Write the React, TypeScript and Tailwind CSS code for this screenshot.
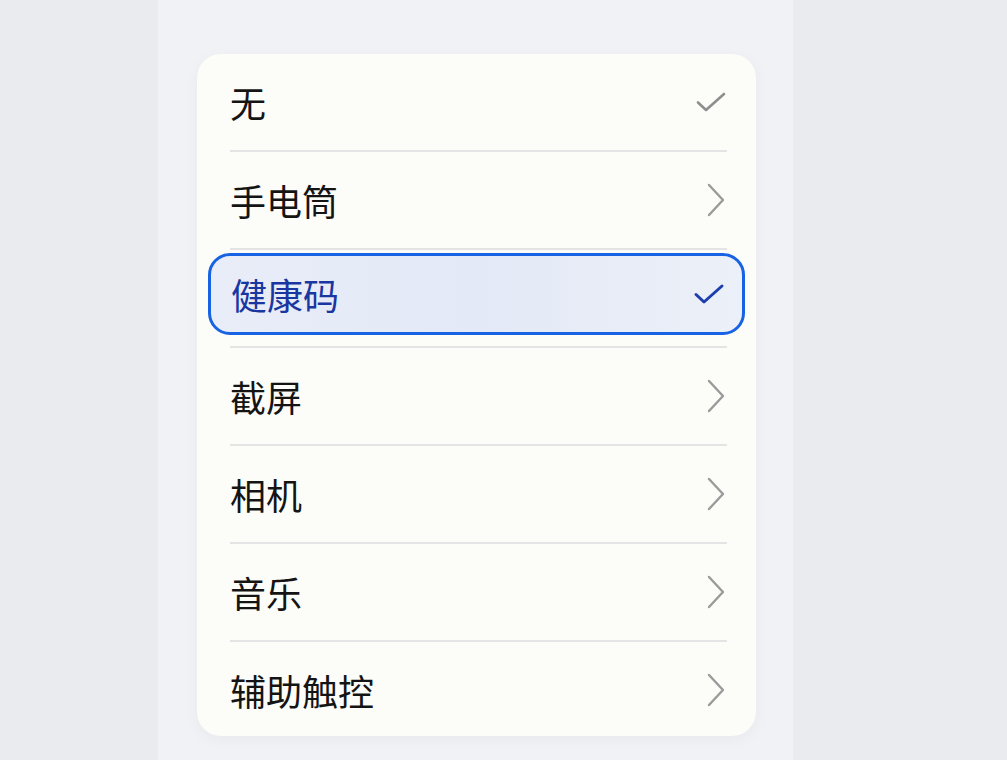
import { Fragment } from 'react';

type Item = { label: string; kind: 'check' | 'chevron' | 'selected' };

const items: Item[] = [
  { label: '无', kind: 'check' },
  { label: '手电筒', kind: 'chevron' },
  { label: '健康码', kind: 'selected' },
  { label: '截屏', kind: 'chevron' },
  { label: '相机', kind: 'chevron' },
  { label: '音乐', kind: 'chevron' },
  { label: '辅助触控', kind: 'chevron' },
];

function Check({ color, weight }: { color: string; weight: number }) {
  return (
    <svg width="32" height="24" viewBox="0 0 32 24" fill="none">
      <path d="M3 12.5L11 20L29 4" stroke={color} strokeWidth={weight} strokeLinecap="round" strokeLinejoin="round" />
    </svg>
  );
}

function Chevron() {
  return (
    <svg width="20" height="34" viewBox="0 0 20 34" fill="none">
      <path d="M3 2L17 17L3 32" stroke="#9a9a9a" strokeWidth="2.4" strokeLinecap="round" strokeLinejoin="round" />
    </svg>
  );
}

export default function App() {
  return (
    <div
      className="flex h-[760px] w-full bg-[#e9ebee] pl-[158px]"
      style={{ fontFamily: '"Noto Sans CJK SC", "Noto Sans", sans-serif' }}
    >
      <div className="w-[635px] bg-[#f0f2f5] pl-[39px] pt-[54px]">
        <div className="h-[682px] w-[559px] rounded-[24px] bg-[#fcfcf8] pl-[33px] pr-[29px] shadow-[0_4px_16px_rgba(0,0,0,0.04)]">
          {items.map((item, i) => (
            <Fragment key={item.label}>
              {i > 0 && <div className="h-[2px] bg-[#e4e4e4]" />}
              {item.kind === 'selected' ? (
                <div className="flex h-[96px] items-start pt-[3px]">
                  <div className="-ml-[22px] -mr-[18px] flex h-[82px] flex-1 items-center justify-between rounded-[22px] border-[3px] border-[#1763e4] bg-gradient-to-r from-[#e8edf8] via-[#e3e9f6] to-[#ecf0f8] pl-[20px] pr-[17px]">
                    <span className="text-[36px] leading-none text-[#1a36a0]">{item.label}</span>
                    <Check color="#1d3fae" weight={3} />
                  </div>
                </div>
              ) : (
                <div className="flex h-[96px] items-center justify-between">
                  <span className="text-[36px] leading-none text-[#141414]">{item.label}</span>
                  {item.kind === 'check' ? (
                    <span className="mr-[0px]">
                      <Check color="#8e8e8e" weight={2.6} />
                    </span>
                  ) : (
                    <span className="mr-[1px]">
                      <Chevron />
                    </span>
                  )}
                </div>
              )}
            </Fragment>
          ))}
        </div>
      </div>
    </div>
  );
}
